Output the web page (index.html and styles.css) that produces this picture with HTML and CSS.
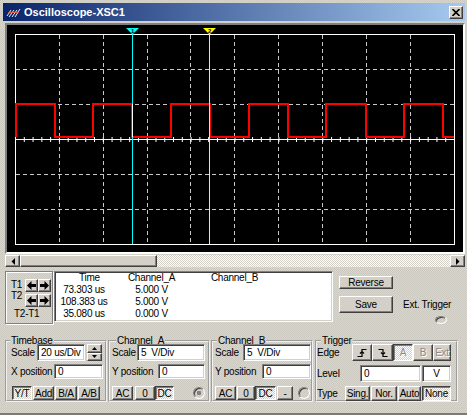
FILE: index.html
```html
<!DOCTYPE html>
<html lang="en">
<head>
    <meta charset="UTF-8">
    <title>Oscilloscope-XSC1</title>
    <link rel="stylesheet" href="styles.css">
</head>
<body>
<div class="window">
    <div class="titlebar">
        <svg class="app-icon" width="15" height="11" viewBox="0 0 15 11">
            <path d="M1 9 L5 3 M3 10 L8 3 M6 10 L11 3 M9 10 L14 2" stroke="#e0e8ff" stroke-width="1"/>
            <path d="M2 6 L13 5" stroke="#ff6030" stroke-width="1.2"/>
        </svg>
        <span class="title">Oscilloscope-XSC1</span>
        <span class="close">
            <svg width="8" height="7" viewBox="0 0 8 7"><path d="M0.5 0 L7.5 7 M7.5 0 L0.5 7" stroke="#000" stroke-width="1.6"/></svg>
        </span>
    </div>

    <div class="screen">
        <svg width="456" height="227" viewBox="0 0 456 227">
            <g transform="translate(-7,-25)">
                <!-- grid -->
                <g stroke="#c8c8c8" stroke-width="1" stroke-dasharray="4 3">
                    <path d="M59.5 35 V244 M103.5 35 V244 M147.5 35 V244 M190.5 35 V244 M234.5 35 V244 M278.5 35 V244 M322.5 35 V244 M366.5 35 V244 M410.5 35 V244"/>
                    <path d="M16 69.5 H454 M16 104.5 H454 M16 174.5 H454 M16 209.5 H454"/>
                </g>
                <rect x="15.5" y="34.5" width="439" height="210" fill="none" stroke="#fff"/>
                <path d="M15 139.5 H455" stroke="#fff"/>
                <path d="M15 139.5 H455" stroke="#fff" stroke-width="5" stroke-dasharray="1 7.78"/>

                <!-- channel A -->
                <path d="M16 137 V104 H55 V137 H93 V104 H132 V137 H171 V104 H210 V137 H249 V104 H288 V137 H326 V104 H366 V137 H404 V104 H443 V137 H454"
                      fill="none" stroke="#ff0000" stroke-width="2"/>

                <!-- cursors -->
                <path d="M132.5 34 V104 M132.5 137 V244" stroke="#00ffff"/>
                <path d="M132.5 104 V137" stroke="#fff"/>
                <polygon points="126,28 139,28 132.5,34.5" fill="#00ffff"/>
                <text x="132.5" y="33" class="cursor-num">1</text>
                <path d="M209.5 34 V244" stroke="#ffff00"/>
                <polygon points="203,28 216,28 209.5,34.5" fill="#ffff00"/>
                <text x="209.5" y="33" class="cursor-num">2</text>
            </g>
        </svg>
    </div>

    <div class="hscroll">
        <span class="raised sb-btn"><svg width="4" height="7"><path d="M4 0 V7 L0.5 3.5 Z" fill="#000"/></svg></span>
        <span class="raised sb-thumb"></span>
        <span class="sb-track"></span>
        <span class="raised sb-btn"><svg width="4" height="7"><path d="M0 0 V7 L3.5 3.5 Z" fill="#000"/></svg></span>
    </div>

    <div class="readout">
        <div class="tpanel">
            <div class="tgrid">
                <div class="tlabels">
                    <div>T1</div>
                    <div>T2</div>
                </div>
                <div class="tbtns">
                    <span class="raised arrow-btn"><svg width="9" height="9"><path d="M0 4.5 L4.5 0 V3 H9 V6 H4.5 V9 Z" fill="#000"/></svg></span>
                    <span class="raised arrow-btn"><svg width="9" height="9"><path d="M9 4.5 L4.5 0 V3 H0 V6 H4.5 V9 Z" fill="#000"/></svg></span>
                    <span class="raised arrow-btn"><svg width="9" height="9"><path d="M0 4.5 L4.5 0 V3 H9 V6 H4.5 V9 Z" fill="#000"/></svg></span>
                    <span class="raised arrow-btn"><svg width="9" height="9"><path d="M9 4.5 L4.5 0 V3 H0 V6 H4.5 V9 Z" fill="#000"/></svg></span>
                </div>
            </div>
            <div class="tdiff">T2-T1</div>
        </div>

        <div class="table">
            <div class="th-time">Time</div><div>Channel_A</div><div>Channel_B</div>
            <div>73.303 us</div><div>5.000 V</div><div></div>
            <div>108.383 us</div><div>5.000 V</div><div></div>
            <div>35.080 us</div><div>0.000 V</div><div></div>
        </div>

        <div class="side">
            <span class="raised btn w54 h17">Reverse</span>
            <div class="save-row">
                <span class="raised btn w54 h17">Save</span>
                <span class="ext-label">Ext. Trigger</span>
            </div>
            <span class="radio ext-radio"></span>
        </div>
    </div>

    <div class="controls">
        <fieldset class="group timebase">
            <legend>Timebase</legend>
            <div class="row r1">
                <span class="lbl w26">Scale</span>
                <span class="field w48">20 us/Div</span>
                <span class="spin">
                    <span class="raised spin-btn"><svg width="5" height="3"><path d="M0 3 H5 L2.5 0 Z" fill="#000"/></svg></span>
                    <span class="raised spin-btn"><svg width="5" height="3"><path d="M0 0 H5 L2.5 3 Z" fill="#000"/></svg></span>
                </span>
            </div>
            <div class="row r2">
                <span class="lbl w43">X position</span>
                <span class="field w49">0</span>
            </div>
            <div class="row r3 packed">
                <span class="pressed btn w20">Y/T</span>
                <span class="raised btn w21">Add</span>
                <span class="raised btn w22">B/A</span>
                <span class="raised btn w22">A/B</span>
            </div>
        </fieldset>

        <fieldset class="group chan-a">
            <legend>Channel_A</legend>
            <div class="row r1">
                <span class="lbl w25">Scale</span>
                <span class="field w68">5  V/Div</span>
            </div>
            <div class="row r2">
                <span class="lbl w46">Y position</span>
                <span class="field w47">0</span>
            </div>
            <div class="row r3">
                <span class="raised btn w21">AC</span>
                <span class="raised btn w20 ml2">0</span>
                <span class="pressed btn w19">DC</span>
                <span class="radio dotted ml19"></span>
            </div>
        </fieldset>

        <fieldset class="group chan-b">
            <legend>Channel_B</legend>
            <div class="row r1">
                <span class="lbl w28">Scale</span>
                <span class="field w68">5  V/Div</span>
            </div>
            <div class="row r2">
                <span class="lbl w47">Y position</span>
                <span class="field w49">0</span>
            </div>
            <div class="row r3">
                <span class="raised btn w21">AC</span>
                <span class="raised btn w18 ml1">0</span>
                <span class="pressed btn w21">DC</span>
                <span class="raised btn w16 ml1">-</span>
                <span class="radio ml5"></span>
            </div>
        </fieldset>

        <fieldset class="group trigger">
            <legend>Trigger</legend>
            <div class="row r1">
                <span class="lbl w35">Edge</span>
                <span class="raised btn w20"><svg width="10" height="10"><path d="M0.5 8.5 H5 V1.5 H9.5 M3 5.5 L5 3.5 L7 5.5" fill="none" stroke="#000" stroke-width="1.2"/></svg></span>
                <span class="raised btn w21"><svg width="10" height="10"><path d="M0.5 1.5 H5 V8.5 H9.5 M3 4.5 L5 6.5 L7 4.5" fill="none" stroke="#000" stroke-width="1.2"/></svg></span>
                <span class="pressed btn w20 off">A</span>
                <span class="raised btn w20 off">B</span>
                <span class="raised btn w18 off">Ext</span>
            </div>
            <div class="row r2 tall">
                <span class="lbl w43">Level</span>
                <span class="field w61">0</span>
                <span class="field w29 ml1 center">V</span>
            </div>
            <div class="row r3 type-row packed">
                <span class="lbl w28">Type</span>
                <span class="raised btn w25">Sing.</span>
                <span class="raised btn w26">Nor.</span>
                <span class="raised btn w23">Auto</span>
                <span class="pressed btn w29">None</span>
            </div>
        </fieldset>
    </div>
</div>
</body>
</html>
```

FILE: styles.css
```css
body {
    margin: 0;
    font-family: "Liberation Sans", Arial, sans-serif;
    font-size: 10px;
    letter-spacing: -0.25px;
    color: #000;
}
.window {
    width: 467px;
    height: 415px;
    box-sizing: border-box;
    overflow: hidden;
    background: repeating-conic-gradient(#ddd4cc 0 25%, #cccac0 0 50%) 0 0 / 2px 2px;
    border-bottom: 2px solid #7c7a74;
}

/* title bar */
.titlebar {
    display: flex;
    align-items: center;
    height: 18px;
    margin: 3px 2px 0 3px;
    background: linear-gradient(to right, #0a246a, #a6caf0);
}
.app-icon {
    margin-left: 3px;
}
.title {
    margin-left: 3px;
    color: #fff;
    font-weight: bold;
    font-size: 11px;
    letter-spacing: 0;
}
.close {
    display: flex;
    align-items: center;
    justify-content: center;
    width: 14px;
    height: 13px;
    margin-left: auto;
    margin-right: 2px;
    box-sizing: border-box;
    background: #d4d0c8;
    border: 1px solid;
    border-color: #fff #404040 #404040 #fff;
    box-shadow: inset -1px -1px #808080;
}

/* scope screen */
.screen {
    margin: 2px 2px 0 5px;
    height: 227px;
    background: #000;
    border: 2px solid;
    border-color: #808080 #fff #fff #808080;
}
.screen svg {
    display: block;
}
.cursor-num {
    font-size: 6px;
    font-weight: bold;
    text-anchor: middle;
    fill: #000;
}

/* shared 3d bits */
.raised {
    box-sizing: border-box;
    background: #d4d0c8;
    border: 1px solid;
    border-color: #fff #404040 #404040 #fff;
    box-shadow: inset -1px -1px #808080;
}
.pressed {
    box-sizing: border-box;
    background: repeating-conic-gradient(#fff 0 25%, #d4d0c8 0 50%) 0 0 / 2px 2px;
    border: 1px solid;
    border-color: #404040 #fff #fff #404040;
    box-shadow: inset 1px 1px #808080;
}
.btn {
    display: flex;
    align-items: center;
    justify-content: center;
    height: 100%;
    white-space: nowrap;
}
.off {
    color: #8c8c8c;
    text-shadow: 1px 1px #fff;
}
.field {
    display: flex;
    align-items: center;
    height: 100%;
    box-sizing: border-box;
    padding-left: 3px;
    background: #fff;
    border: 1px solid;
    border-color: #808080 #fff #fff #808080;
    box-shadow: inset 1px 1px #404040, inset -1px -1px #d4d0c8;
    white-space: pre;
}
.field.center {
    justify-content: center;
    padding-left: 0;
}
.radio {
    width: 12px;
    height: 12px;
    box-sizing: border-box;
    border-radius: 50%;
    border: 1px solid;
    border-color: #808080 #fff #fff #808080;
    box-shadow: inset 1px 1px #404040;
}
.radio.dotted {
    background: radial-gradient(circle, #808080 0 2px, transparent 2.5px);
}

/* scrollbar */
.hscroll {
    display: flex;
    height: 12px;
    margin: 1px 2px 0 5px;
}
.sb-btn {
    display: flex;
    align-items: center;
    justify-content: center;
    width: 15px;
}
.sb-thumb {
    width: 137px;
}
.sb-track {
    flex: 1;
    background: repeating-conic-gradient(#fff 0 25%, #d4d0c8 0 50%) 0 0 / 2px 2px;
}

/* cursor readout */
.readout {
    display: flex;
    height: 53px;
    margin: 4px 0 0 5px;
}
.tpanel {
    width: 48px;
    box-sizing: border-box;
    border: 1px solid #808080;
    box-shadow: inset 1px 1px #fff, 1px 1px #fff;
}
.tgrid {
    display: flex;
    padding-top: 7px;
}
.tlabels {
    width: 14px;
    padding-left: 5px;
    line-height: 11px;
    padding-top: 0;
}
.tbtns {
    display: grid;
    grid-template-columns: 13px 13px;
    grid-auto-rows: 13px;
    row-gap: 2px;
}
.arrow-btn {
    display: flex;
    align-items: center;
    justify-content: center;
}
.tdiff {
    padding-left: 8px;
    line-height: 12px;
    margin-top: 1px;
}
.table {
    display: grid;
    grid-template-columns: 58px 77px 89px;
    grid-auto-rows: 12px;
    align-content: start;
    width: 279px;
    height: 51px;
    margin-left: 1px;
    box-sizing: border-box;
    line-height: 12px;
    text-align: center;
    background: #fff;
    border: 1px solid;
    border-color: #808080 #fff #fff #808080;
    box-shadow: inset 1px 1px #404040, inset -1px -1px #d4d0c8;
}
.th-time {
    padding-left: 11px;
}
.side {
    display: flex;
    flex-direction: column;
    margin-left: 6px;
}
.side > .btn {
    margin-top: 5px;
}
.save-row {
    display: flex;
    align-items: center;
    margin-top: 7px;
}
.ext-label {
    margin-left: 10px;
}
.ext-radio {
    margin: 3px 0 0 96px;
}

/* control groups */
.controls {
    display: flex;
    margin: 12px 0 0 5px;
}
.group {
    height: 66px;
    margin: 0;
    padding: 0 0 0 4px;
    box-sizing: border-box;
    min-width: 0;
    border: 2px groove #f0f0f0;
}
.group legend {
    padding: 0 1px;
    line-height: 10px;
}
.timebase { width: 102px; }
.timebase legend { margin-left: -1px; }
.chan-a { width: 102px; margin-left: 1px; padding-left: 2px; }
.chan-a legend { margin-left: 4px; }
.chan-b { width: 102px; margin-left: 1px; padding-left: 2px; }
.chan-b legend { margin-left: 2px; }
.trigger { width: 143px; margin-left: 2px; padding-left: 0; }
.trigger legend { margin-left: 4px; }

.row {
    display: flex;
    align-items: center;
}
.r1 { height: 17px; margin-top: -2px; }
.r2 { height: 15px; margin-top: 3px; }
.r2.tall { height: 17px; margin-top: 4px; }
.r3 { height: 14px; margin-top: 7px; }
.type-row { height: 15px; margin-top: 4px; }
.packed > .btn + .btn { margin-left: 1px; }
.timebase .r3 { padding-left: 1px; }
.lbl { white-space: nowrap; }

.spin {
    display: flex;
    flex-direction: column;
    width: 15px;
    height: 17px;
    margin-left: 2px;
}
.spin-btn {
    display: flex;
    align-items: center;
    justify-content: center;
    flex: 1;
}

.ml1 { margin-left: 1px; }
.ml2 { margin-left: 2px; }
.ml5 { margin-left: 5px; }
.ml19 { margin-left: 19px; }
.h17 { height: 17px; }
.w16 { width: 16px; }
.w18 { width: 18px; }
.w19 { width: 19px; }
.w20 { width: 20px; }
.w21 { width: 21px; }
.w22 { width: 22px; }
.w23 { width: 23px; }
.w25 { width: 25px; }
.w26 { width: 26px; }
.w28 { width: 28px; }
.w29 { width: 29px; }
.w35 { width: 35px; }
.w43 { width: 43px; }
.w46 { width: 46px; }
.w47 { width: 47px; }
.w48 { width: 48px; }
.w49 { width: 49px; }
.w54 { width: 54px; }
.w61 { width: 61px; }
.w68 { width: 68px; }
```
